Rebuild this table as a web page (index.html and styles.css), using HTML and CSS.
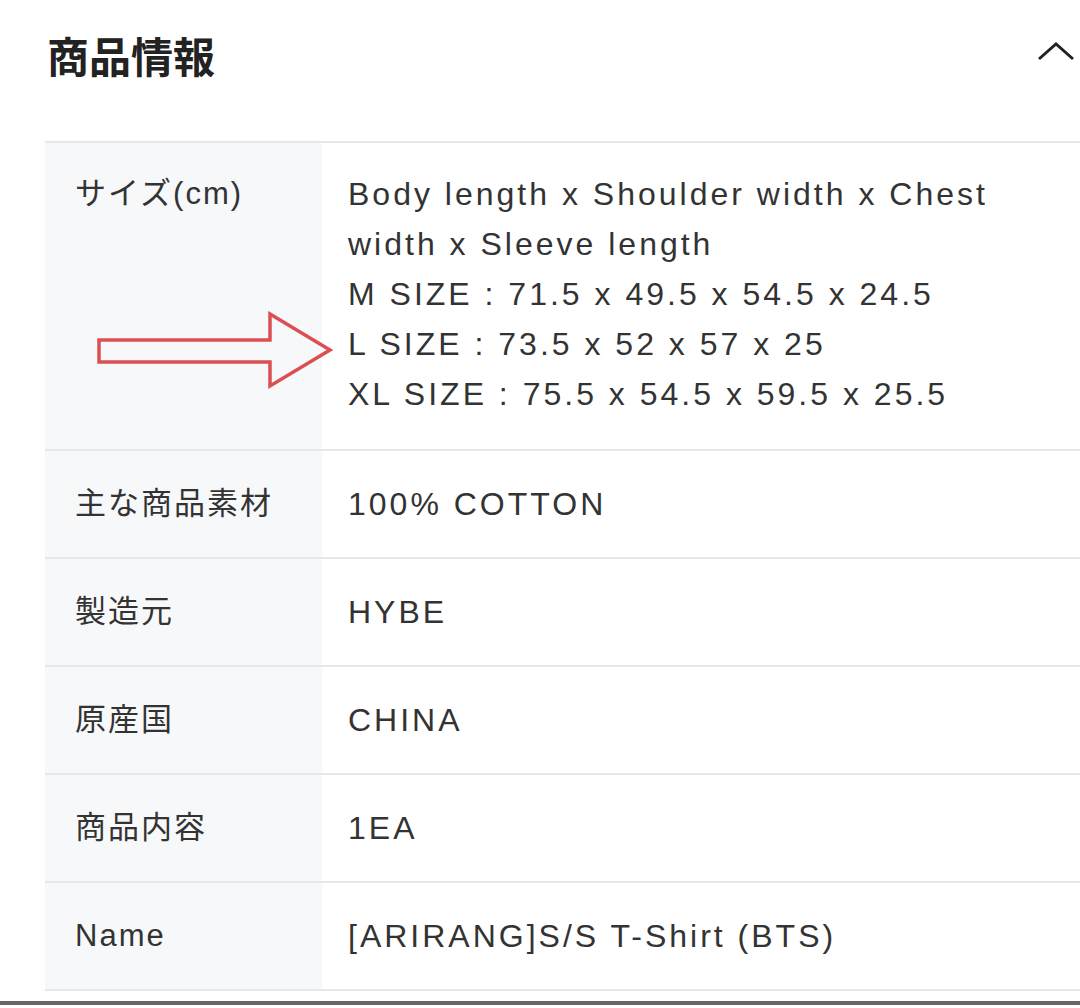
FILE: index.html
```html
<!DOCTYPE html>
<html>
	<head>
		<meta charset="UTF-8">
		<title>商品情報</title>
		<link rel="stylesheet" href="styles.css">
	</head>
	<body>
		<div class="panel">
			<div class="head">
				<h2>商品情報</h2>
				<svg class="chev" width="40" height="24" viewBox="0 0 40 24">
					<polyline points="3,20 20,5 37,20" fill="none" stroke="#222" stroke-width="3"/>
				</svg>
			</div>
			<div class="spec">
				<div class="row first">
					<div class="key">サイズ(cm)</div>
					<div class="val">
						Body length x Shoulder width x Chest<br>
						width x Sleeve length<br>
						M SIZE : 71.5 x 49.5 x 54.5 x 24.5<br>
						L SIZE : 73.5 x 52 x 57 x 25<br>
						XL SIZE : 75.5 x 54.5 x 59.5 x 25.5
					</div>
					<svg class="arrow" width="240" height="80" viewBox="0 0 240 80">
						<polygon points="3,29 174,29 174,3 234,39 174,75 174,51 3,51" fill="none" stroke="#db4f52" stroke-width="3.5" stroke-linejoin="miter"/>
					</svg>
				</div>
				<div class="row">
					<div class="key">主な商品素材</div>
					<div class="val">100% COTTON</div>
				</div>
				<div class="row">
					<div class="key">製造元</div>
					<div class="val">HYBE</div>
				</div>
				<div class="row">
					<div class="key">原産国</div>
					<div class="val">CHINA</div>
				</div>
				<div class="row">
					<div class="key">商品内容</div>
					<div class="val">1EA</div>
				</div>
				<div class="row">
					<div class="key">Name</div>
					<div class="val">[ARIRANG]S/S T-Shirt (BTS)</div>
				</div>
			</div>
		</div>
		<div class="edge"></div>
	</body>
</html>
```

FILE: styles.css
```css
body{
	margin: 0;
	background: #fff;
	color: #333;
	font-family: "Liberation Sans", "Noto Sans CJK JP", sans-serif;
}
.panel{
	padding-left: 45px;
}
.head{
	display: flex;
	align-items: center;
	justify-content: space-between;
	height: 108px;
	padding-right: 4px;
	margin-bottom: 33px;
}
.head h2{
	margin: 0;
	padding-left: 2px;
	font-size: 42px;
	font-weight: bold;
	color: #222;
}
.chev{
	margin-top: -6px;
}
.spec{
	border-top: 2px solid #e6e7ea;
}
.row{
	position: relative;
	display: flex;
	border-bottom: 2px solid #e6e7ea;
	font-size: 32px;
	line-height: 50px;
	letter-spacing: 3px;
}
.key{
	width: 247px;
	flex: none;
	padding: 28px 0 28px 30px;
	background: #f7f8fa;
	font-size: 31px;
	letter-spacing: 2px;
}
.first .key{
	padding-top: 26px;
}
.val{
	flex: 1;
	padding: 28px 0 28px 26px;
	white-space: nowrap;
}
.first .val{
	padding-top: 26px;
	padding-bottom: 30px;
}
.arrow{
	position: absolute;
	left: 51px;
	top: 168px;
}
.edge{
	margin-top: 10px;
	height: 4px;
	background: #666;
}
```
